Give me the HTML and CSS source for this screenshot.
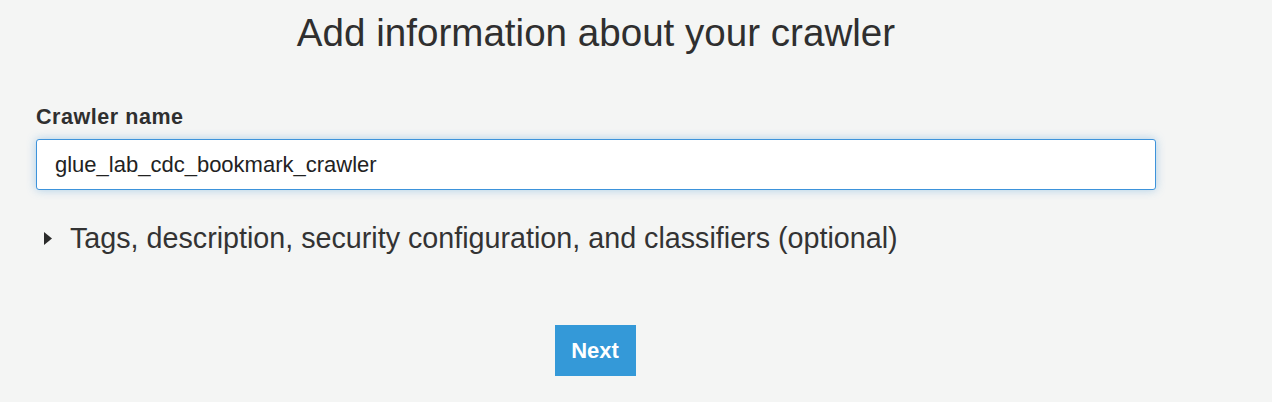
FILE: index.html
```html
<!DOCTYPE html>
<html>
<head>
<meta charset="utf-8">
<link rel="stylesheet" href="styles.css">
</head>
<body>
<div class="page">
  <h1 class="title">Add information about your crawler</h1>
  <label class="label" for="name">Crawler name</label>
  <input class="input" id="name" type="text" value="glue_lab_cdc_bookmark_crawler">
  <div class="expander">
    <svg class="caret" width="8" height="13" viewBox="0 0 8 13"><path d="M0 0 L8 6.5 L0 13 Z" fill="#2b2b2b"/></svg>
    <span class="expander-text">Tags, description, security configuration, and classifiers (optional)</span>
  </div>
  <div class="actions">
    <button class="btn">Next</button>
  </div>
</div>
</body>
</html>
```
FILE: styles.css
```css
html, body {
  margin: 0;
  padding: 0;
  background: #f4f5f4;
}
body {
  font-family: "Liberation Sans", Arial, sans-serif;
  color: #333;
}
.page {
  width: 1120px;
  margin-left: 36px;
  display: flex;
  flex-direction: column;
}
.title {
  margin: 11px 0 0 0;
  font-weight: normal;
  font-size: 38.6px;
  line-height: 44px;
  text-align: center;
  color: #2f2f2f;
}
.label {
  margin-top: 50px;
  font-weight: bold;
  font-size: 21.5px;
  line-height: 24px;
  letter-spacing: 0.55px;
  color: #2f2f2f;
}
.input {
  margin-top: 10px;
  box-sizing: border-box;
  width: 1120px;
  height: 51px;
  border: 1px solid #3d93db;
  border-radius: 3px;
  box-shadow: 0 0 10px rgba(66, 148, 214, 0.4);
  background: #fff;
  padding: 0 18px;
  font-family: "Liberation Sans", Arial, sans-serif;
  font-size: 22px;
  color: #222;
  outline: none;
}
.expander {
  margin-top: 31px;
  display: flex;
  align-items: center;
  gap: 18px;
  padding-left: 8px;
}
.caret {
  display: block;
}
.expander-text {
  font-size: 28.7px;
  line-height: 34px;
  color: #333;
}
.actions {
  margin-top: 70px;
  display: flex;
  justify-content: center;
  padding-right: 2px;
}
.btn {
  width: 81px;
  height: 51px;
  border: none;
  background: #3499d8;
  color: #fff;
  font-family: "Liberation Sans", Arial, sans-serif;
  font-weight: bold;
  font-size: 22px;
  padding: 0;
}
```
